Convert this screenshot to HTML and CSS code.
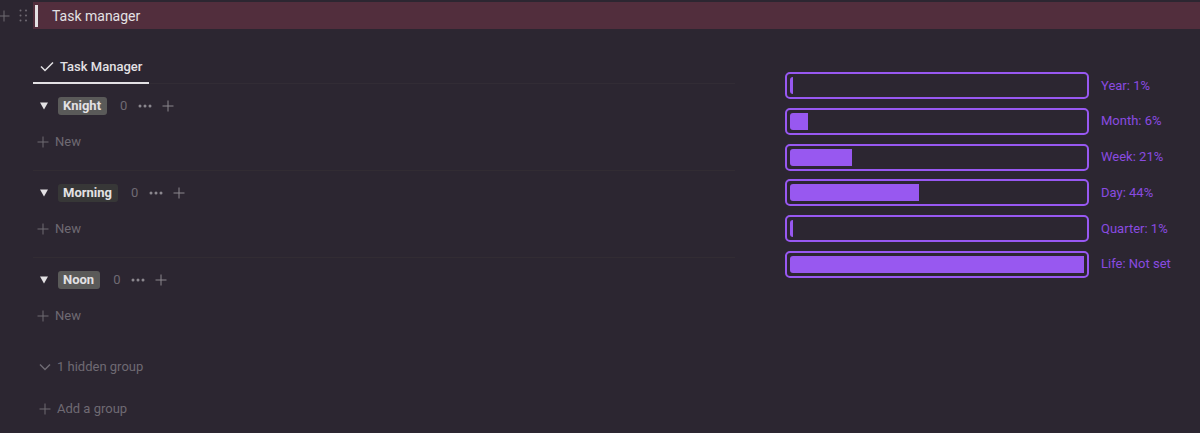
FILE: index.html
```html
<!DOCTYPE html>
<html lang="en">
<head>
    <meta charset="UTF-8">
    <meta name="viewport" content="width=device-width, initial-scale=1.0">
    <title>Task manager</title>
    <link rel="stylesheet" href="styles.css">
</head>
<body>
    <svg class="sprite" aria-hidden="true">
        <symbol id="plus" viewBox="0 0 12 12"><path d="M6 0.5v11M0.5 6h11"/></symbol>
        <symbol id="dots" viewBox="0 0 14 12"><path d="M2 6h.01M7 6h.01M12 6h.01"/></symbol>
        <symbol id="triangle" viewBox="0 0 8 8"><path d="M0 0.5h8L4 7.5z"/></symbol>
    </svg>

    <header class="callout-row">
        <div class="handles">
            <button class="icon-btn" aria-label="Add block"><svg class="icon"><use href="#plus"/></svg></button>
            <button class="icon-btn" aria-label="Drag block">
                <svg class="grip" viewBox="0 0 9 13"><path d="M1.5 1.5h.01M7 1.5h.01M1.5 6.5h.01M7 6.5h.01M1.5 11.5h.01M7 11.5h.01"/></svg>
            </button>
        </div>
        <blockquote class="callout">Task manager</blockquote>
    </header>

    <main class="columns">
        <section class="board">
            <nav class="tabs">
                <button class="tab">
                    <svg class="check" viewBox="0 0 14 10"><path d="M1 4.5l4 4L13 0.5"/></svg>
                    Task Manager
                </button>
            </nav>

            <div class="group">
                <div class="group-head">
                    <button class="icon-btn toggle" aria-label="Collapse Knight"><svg class="triangle"><use href="#triangle"/></svg></button>
                    <span class="tag">Knight</span>
                    <span class="count">0</span>
                    <button class="icon-btn" aria-label="Knight options"><svg class="dots"><use href="#dots"/></svg></button>
                    <button class="icon-btn" aria-label="Add to Knight"><svg class="icon"><use href="#plus"/></svg></button>
                </div>
                <button class="new"><svg class="icon"><use href="#plus"/></svg>New</button>
            </div>

            <div class="group">
                <div class="group-head">
                    <button class="icon-btn toggle" aria-label="Collapse Morning"><svg class="triangle"><use href="#triangle"/></svg></button>
                    <span class="tag tag-dark">Morning</span>
                    <span class="count">0</span>
                    <button class="icon-btn" aria-label="Morning options"><svg class="dots"><use href="#dots"/></svg></button>
                    <button class="icon-btn" aria-label="Add to Morning"><svg class="icon"><use href="#plus"/></svg></button>
                </div>
                <button class="new"><svg class="icon"><use href="#plus"/></svg>New</button>
            </div>

            <div class="group">
                <div class="group-head">
                    <button class="icon-btn toggle" aria-label="Collapse Noon"><svg class="triangle"><use href="#triangle"/></svg></button>
                    <span class="tag">Noon</span>
                    <span class="count">0</span>
                    <button class="icon-btn" aria-label="Noon options"><svg class="dots"><use href="#dots"/></svg></button>
                    <button class="icon-btn" aria-label="Add to Noon"><svg class="icon"><use href="#plus"/></svg></button>
                </div>
                <button class="new"><svg class="icon"><use href="#plus"/></svg>New</button>
            </div>

            <div class="board-footer">
                <button class="new"><svg class="icon chevron" viewBox="0 0 12 12"><path d="M1 3.5l5 5 5-5"/></svg>1 hidden group</button>
                <button class="new"><svg class="icon"><use href="#plus"/></svg>Add a group</button>
            </div>
        </section>

        <section class="progress">
            <div class="bar"><div class="fill" style="width: 1%"></div></div>
            <span class="label">Year: 1%</span>
            <div class="bar"><div class="fill" style="width: 6%"></div></div>
            <span class="label">Month: 6%</span>
            <div class="bar"><div class="fill" style="width: 21%"></div></div>
            <span class="label">Week: 21%</span>
            <div class="bar"><div class="fill" style="width: 44%"></div></div>
            <span class="label">Day: 44%</span>
            <div class="bar"><div class="fill" style="width: 1%"></div></div>
            <span class="label">Quarter: 1%</span>
            <div class="bar"><div class="fill" style="width: 100%"></div></div>
            <span class="label">Life: Not set</span>
        </section>
    </main>
</body>
</html>
```

FILE: styles.css
```css
body {
    margin: 0;
    background-color: #2c2631;
    color: #e3e1e4;
    font-family: Roboto, "Open Sans", sans-serif;
    font-size: 13px;
    line-height: 20px;
}
button {
    display: flex;
    align-items: center;
    padding: 0;
    border: none;
    background: none;
    color: inherit;
    font: inherit;
    cursor: pointer;
}
svg {
    display: block;
    fill: none;
    stroke: currentColor;
}
.sprite {
    display: none;
}
.icon {
    width: 12px;
    height: 12px;
}
.icon-btn {
    color: #8b878e;
}

/* callout */
.callout-row {
    display: flex;
    padding-top: 2px;
}
.handles {
    display: flex;
    justify-content: flex-end;
    gap: 9px;
    box-sizing: border-box;
    width: 33px;
    padding-right: 5px;
}
.handles .icon-btn {
    color: #6f6a73;
}
.grip {
    width: 9px;
    height: 13px;
    stroke-width: 2;
    stroke-linecap: round;
}
.callout {
    display: flex;
    align-items: center;
    flex: 1;
    margin: 0;
    padding: 3px 2px 2px;
    background-color: #522e3d;
    font-size: 14px;
    line-height: 22px;
}
.callout::before {
    content: "";
    align-self: stretch;
    width: 3px;
    margin-right: 14px;
    background-color: #e3e1e4;
}

/* columns */
.columns {
    display: grid;
    grid-template-columns: 11fr 6fr;
    align-items: start;
    gap: 50px;
    padding: 22px 32px 0 33px;
}
.tabs {
    display: flex;
    border-bottom: 1px solid #322c35;
}
.tab {
    gap: 6px;
    height: 33px;
    margin-bottom: -1px;
    padding: 0 7px;
    border-bottom: 2px solid #e3e1e4;
    font-weight: 500;
}
.check {
    width: 14px;
    height: 10px;
    stroke-width: 1.5;
}

/* groups */
.group {
    display: flex;
    flex-direction: column;
    align-items: flex-start;
    gap: 16px;
    padding: 12px 4px 18px;
    border-bottom: 1px solid #322c33;
}
.group:nth-of-type(3) {
    border-bottom-color: transparent;
}
.group-head {
    display: flex;
    align-items: center;
    gap: 10px;
    padding-left: 3px;
}
.toggle {
    color: #e3e1e4;
}
.triangle {
    width: 8px;
    height: 8px;
    fill: currentColor;
    stroke: none;
}
.tag {
    padding: 0 6px 0 5px;
    border-radius: 3px;
    background-color: #5a5a59;
    font-weight: 700;
    line-height: 18px;
}
.tag-dark {
    background-color: #373737;
}
.count {
    margin: 0 1px 0 3px;
    color: #6f6a73;
}
.dots {
    width: 14px;
    height: 12px;
    stroke-width: 3;
    stroke-linecap: round;
}
.new {
    gap: 6px;
    color: #6f6a73;
}
.board-footer {
    display: flex;
    flex-direction: column;
    align-items: flex-start;
    gap: 22px;
    padding: 12px 6px;
}
.chevron {
    stroke-width: 1.5;
}

/* progress bars */
.progress {
    display: grid;
    grid-template-columns: 1fr 67px;
    align-items: center;
    align-content: space-between;
    column-gap: 12px;
    min-height: 206px;
    margin-top: 21px;
    color: #8a4be0;
    white-space: nowrap;
}
.bar {
    padding: 3px;
    border: 2px solid #9858f2;
    border-radius: 5px;
}
.fill {
    height: 17px;
    border-radius: 3px 0 0 3px;
    background-color: #9858f0;
}
```
